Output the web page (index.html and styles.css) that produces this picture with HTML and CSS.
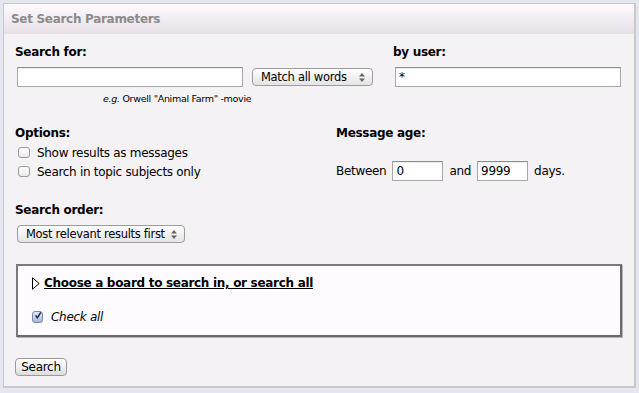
FILE: index.html
```html
<!DOCTYPE html>
<html lang="en">
<head>
    <meta charset="UTF-8">
    <title>Search</title>
    <link rel="stylesheet" href="styles.css">
</head>
<body>
    <form class="panel">
        <div class="panel-head">Set Search Parameters</div>
        <div class="panel-body">

            <div class="row-top">
                <div class="field">
                    <label class="label">Search for:</label>
                    <div class="inline">
                        <input class="text wide" type="text">
                        <span class="select-wrap words">
                            <select class="select"><option>Match all words</option></select>
                            <svg class="arrows" width="6" height="9" viewBox="0 0 6 9"><path d="M0 3.5L3 0L6 3.5Z M0 5.5L3 9L6 5.5Z"/></svg>
                        </span>
                    </div>
                    <div class="hint"><i>e.g.</i> Orwell "Animal Farm" -movie</div>
                </div>
                <div class="field">
                    <label class="label">by user:</label>
                    <input class="text wide" type="text" value="*">
                </div>
            </div>

            <div class="row-mid">
                <div class="field">
                    <div class="label">Options:</div>
                    <label class="check"><span class="box"></span>Show results as messages</label>
                    <label class="check"><span class="box"></span>Search in topic subjects only</label>
                </div>
                <div class="field">
                    <div class="label">Message age:</div>
                    <div class="age">
                        <span>Between</span>
                        <input class="text short" type="text" value="0">
                        <span>and</span>
                        <input class="text short" type="text" value="9999">
                        <span>days.</span>
                    </div>
                </div>
            </div>

            <div class="field order">
                <div class="label">Search order:</div>
                <span class="select-wrap sort">
                    <select class="select"><option>Most relevant results first</option></select>
                    <svg class="arrows" width="6" height="9" viewBox="0 0 6 9"><path d="M0 3.5L3 0L6 3.5Z M0 5.5L3 9L6 5.5Z"/></svg>
                </span>
            </div>

            <fieldset class="boards">
                <div class="boards-title">
                    <svg width="8" height="13" viewBox="0 0 8 13"><path d="M0.5 0.8L7.2 6.5L0.5 12.2Z" fill="#fff" stroke="#000" stroke-width="1"/></svg>
                    <a href="#">Choose a board to search in, or search all</a>
                </div>
                <label class="check check-all">
                    <span class="box checked">
                        <svg width="11" height="11" viewBox="0 0 11 11"><path d="M2.2 5.4L4.6 8.6L9.4 1.2" fill="none" stroke="#1b2a55" stroke-width="2"/></svg>
                    </span>
                    <i>Check all</i>
                </label>
            </fieldset>

            <button class="btn" type="button">Search</button>
        </div>
    </form>
</body>
</html>
```

FILE: styles.css
```css
body {
    margin: 3px;
    background: #e4e7ef;
    font-family: "DejaVu Sans", Verdana, sans-serif;
    font-size: 12px;
    letter-spacing: -0.3px;
    color: #000;
}
.panel {
    margin: 0;
    height: 385px;
    box-sizing: border-box;
    background: #f5f2f5;
    border: 1px solid #c9c9c9;
    border-right-width: 2px;
    border-bottom-width: 2px;
}
.panel-head {
    height: 30px;
    line-height: 30px;
    padding-left: 7px;
    font-weight: bold;
    color: #8b8b8b;
    background: linear-gradient(#fdf9fd, #e7e1e7);
}
.panel-body {
    padding: 10px 12px 0 11px;
}
.label {
    display: block;
    font-weight: bold;
    line-height: 16px;
}
.row-top {
    display: grid;
    grid-template-columns: 378px 1fr;
}
.row-top .label {
    margin-bottom: 7px;
}
.inline {
    display: flex;
    align-items: center;
}
.text {
    box-sizing: border-box;
    height: 20px;
    margin: 0 0 0 2px;
    padding: 1px 3px;
    border: 1px solid #a9a9a9;
    border-top-color: #8e8e8e;
    background: #fff;
    font: inherit;
    letter-spacing: inherit;
    box-shadow: inset 0 1px 1px rgba(0, 0, 0, 0.08);
}
.wide {
    width: 226px;
}
.short {
    width: 51px;
    margin: 0 6px;
}
.select-wrap {
    position: relative;
    display: inline-block;
}
.words {
    margin-left: 9px;
}
.sort {
    margin: 7px 0 0 2px;
}
.select {
    appearance: none;
    -webkit-appearance: none;
    box-sizing: border-box;
    height: 18px;
    padding: 0 0 0 8px;
    border: 1px solid #9c9c9c;
    border-radius: 4px;
    background: linear-gradient(#ffffff, #f1f1f1 50%, #e4e4e4);
    font: inherit;
    font-size: 11.5px;
    letter-spacing: inherit;
    color: #000;
    display: block;
}
.words .select {
    width: 121px;
}
.sort .select {
    width: 168px;
}
.arrows {
    position: absolute;
    right: 8px;
    top: 5px;
    fill: #666;
    pointer-events: none;
}
.hint {
    margin: 6px 0 0 88px;
    font-size: 9.5px;
    line-height: 12px;
}
.row-mid {
    display: grid;
    grid-template-columns: 321px 1fr;
    margin-top: 20px;
}
.row-mid .label {
    margin-bottom: 2px;
}
.check {
    display: flex;
    align-items: center;
    height: 19px;
    padding-left: 3px;
}
.box {
    box-sizing: border-box;
    width: 12px;
    height: 11px;
    margin-right: 7px;
    border: 1px solid #9a9a9a;
    border-radius: 3px;
    background: linear-gradient(#ffffff, #e9e9e9);
    display: flex;
    align-items: center;
    justify-content: center;
}
.age {
    display: flex;
    align-items: center;
    margin-top: 20px;
    height: 20px;
}
.order {
    margin-top: 21px;
}
.boards {
    margin: 21px 0 0 1px;
    padding: 9px 14px 11px 14px;
    height: 73px;
    box-sizing: border-box;
    border: 2px solid #7a7a7a;
    border-right-color: #6a6a6a;
    border-bottom-color: #6a6a6a;
    box-shadow: 1px 1px 0 #b5b5b5;
    background: #fefbfe;
}
.boards-title {
    display: flex;
    align-items: center;
    gap: 4px;
    line-height: 16px;
}
.boards-title a {
    color: #000;
    font-weight: bold;
    text-decoration: underline;
}
.check-all {
    margin-top: 16px;
    padding-left: 0;
}
.box.checked {
    width: 11px;
    height: 12px;
    margin-right: 8px;
    border-color: #7b8aa5;
    background: linear-gradient(#dfe7f3, #a9bad6);
}
.box.checked svg {
    margin-top: -2px;
    margin-left: 1px;
}
.btn {
    display: block;
    margin-top: 21px;
    height: 18px;
    width: 52px;
    padding: 0;
    border: 1px solid #9a9a9a;
    border-radius: 4px;
    background: linear-gradient(#ffffff, #f0f0f0 50%, #dcdcdc);
    font: inherit;
    letter-spacing: inherit;
    color: #000;
}
```
